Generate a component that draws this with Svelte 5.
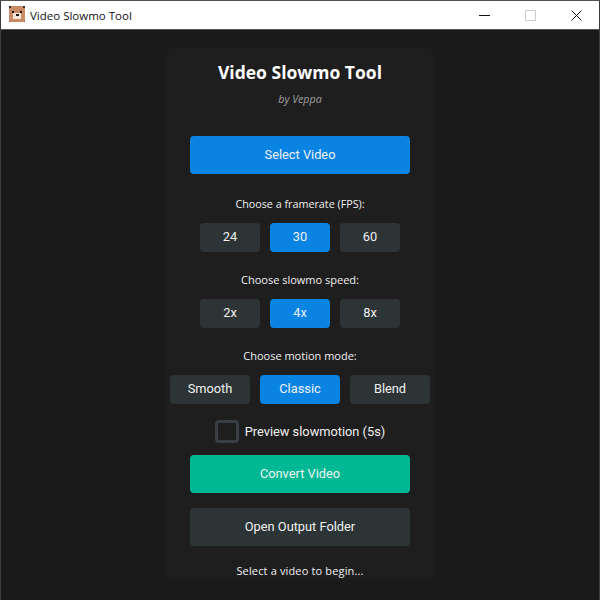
<script lang="ts">
  const fpsOptions = ["24", "30", "60"];
  const speedOptions = ["2x", "4x", "8x"];
  const modeOptions = ["Smooth", "Classic", "Blend"];

  let fps = $state("30");
  let speed = $state("4x");
  let mode = $state("Classic");
  let preview = $state(false);
</script>

<div class="window">
  <header class="titlebar">
    <svg class="app-icon" width="16" height="16" viewBox="0 0 16 16" shape-rendering="crispEdges">
      <rect x="0" y="0" width="16" height="16" fill="#c98a66" />
      <rect x="0" y="0" width="2" height="2" fill="#3a2a22" />
      <rect x="14" y="0" width="2" height="2" fill="#3a2a22" />
      <rect x="0" y="15" width="1" height="1" fill="#7a5a48" />
      <rect x="15" y="15" width="1" height="1" fill="#7a5a48" />
      <rect x="4" y="7" width="8" height="6" fill="#f4e6d8" />
      <rect x="3" y="5" width="2" height="2" fill="#20140f" />
      <rect x="11" y="5" width="2" height="2" fill="#20140f" />
      <rect x="7" y="8" width="3" height="2" fill="#20140f" />
    </svg>
    <span class="window-title">Video Slowmo Tool</span>
    <div class="controls">
      <span class="ctl">
        <svg width="11" height="11" viewBox="0 0 11 11"><path d="M0 5.5h11" stroke="#111" fill="none" /></svg>
      </span>
      <span class="ctl">
        <svg width="11" height="11" viewBox="0 0 11 11"><path d="M.5.5h10v10H.5z" stroke="#ccc" fill="none" /></svg>
      </span>
      <span class="ctl">
        <svg width="11" height="11" viewBox="0 0 11 11"><path d="M.5.5l10 10M10.5.5l-10 10" stroke="#111" fill="none" /></svg>
      </span>
    </div>
  </header>

  <main class="content">
    <section class="card">
      <h1>Video Slowmo Tool</h1>
      <p class="byline">by Veppa</p>

      <button type="button" class="wide primary select">Select Video</button>

      <p class="label first">Choose a framerate (FPS):</p>
      <div class="options">
        {#each fpsOptions as opt}
          <button type="button" class="opt" class:primary={fps === opt} onclick={() => (fps = opt)}>{opt}</button>
        {/each}
      </div>

      <p class="label">Choose slowmo speed:</p>
      <div class="options">
        {#each speedOptions as opt}
          <button type="button" class="opt" class:primary={speed === opt} onclick={() => (speed = opt)}>{opt}</button>
        {/each}
      </div>

      <p class="label">Choose motion mode:</p>
      <div class="options">
        {#each modeOptions as opt}
          <button type="button" class="opt mode" class:primary={mode === opt} onclick={() => (mode = opt)}>{opt}</button>
        {/each}
      </div>

      <label class="check">
        <input type="checkbox" bind:checked={preview} />
        <span>Preview slowmotion (5s)</span>
      </label>

      <button type="button" class="wide convert">Convert Video</button>
      <button type="button" class="wide folder">Open Output Folder</button>

      <p class="status">Select a video to begin...</p>
    </section>
  </main>
</div>

<style>
  :global(body) {
    margin: 0;
    background: #1a1a1a;
  }

  .window {
    display: flex;
    flex-direction: column;
    width: 600px;
    height: 600px;
    overflow: hidden;
    box-sizing: border-box;
    border-left: 1px solid #3c3c3c;
    border-right: 1px solid #3c3c3c;
    border-top: 1px solid #55504c;
  }

  .titlebar {
    display: flex;
    align-items: center;
    flex: none;
    height: 28px;
    padding-left: 8px;
    background: #fff;
    border-bottom: 1px solid #555;
  }

  .app-icon {
    margin: 0 5px 2px 0;
  }

  .window-title {
    color: #111;
    font-family: "Open Sans", "Noto Sans", sans-serif;
    font-size: 11.5px;
  }

  .controls {
    display: flex;
    margin-left: auto;
  }

  .ctl {
    display: flex;
    align-items: center;
    justify-content: center;
    width: 46px;
    height: 28px;
  }

  .content {
    display: flex;
    flex: 1;
    justify-content: center;
    background: #1a1a1a;
    padding-top: 18px;
  }

  .card {
    display: flex;
    flex-direction: column;
    align-items: center;
    box-sizing: border-box;
    width: 268px;
    height: 532px;
    border-radius: 8px;
    background: #1e1e1e;
    padding-top: 12px;
  }

  h1 {
    margin: 0;
    color: #fff;
    font-family: "Open Sans", sans-serif;
    font-size: 17.5px;
    font-weight: 700;
    line-height: 24px;
  }

  .byline {
    margin: 8px 0 0;
    color: #a0a0a0;
    font-family: "Open Sans", sans-serif;
    font-size: 10.7px;
    font-style: italic;
    line-height: 14px;
  }

  button {
    border: 0;
    border-radius: 4px;
    background: #2d3436;
    color: #f0f0f0;
    font-family: Roboto, sans-serif;
    font-size: 12.8px;
    cursor: pointer;
    padding: 0 0 2px;
  }

  .wide {
    flex: none;
    width: 220px;
    height: 38px;
  }

  .primary {
    background: #0984e3;
  }

  .select {
    margin-top: 30px;
  }

  .label {
    height: 26px;
    margin: 21px 0 0;
    color: #f0f0f0;
    font-family: "Open Sans", sans-serif;
    font-size: 11px;
    line-height: 13px;
  }

  .label.first {
    margin-top: 23px;
    font-size: 10.75px;
    line-height: 15px;
  }

  .options {
    display: flex;
    justify-content: center;
    gap: 10px;
  }

  .opt {
    width: 60px;
    height: 29px;
  }

  .mode {
    width: 80px;
  }

  .check {
    display: flex;
    align-items: center;
    gap: 6px;
    height: 24px;
    margin-top: 16px;
    color: #f0f0f0;
    font-family: Roboto, sans-serif;
    font-size: 12.8px;
    padding-bottom: 1px;
    box-sizing: border-box;
  }

  .check input {
    appearance: none;
    box-sizing: border-box;
    width: 24px;
    height: 23px;
    margin: 0;
    border: 3px solid #383e44;
    border-radius: 4px;
    background: #1e1e1e;
  }

  .convert {
    margin-top: 11px;
    background: #00b894;
  }

  .folder {
    margin-top: 15px;
  }

  .status {
    margin: 18px 0 0;
    color: #f0f0f0;
    font-family: "Open Sans", sans-serif;
    font-size: 11px;
    letter-spacing: 0.15px;
    line-height: 13px;
  }
</style>
